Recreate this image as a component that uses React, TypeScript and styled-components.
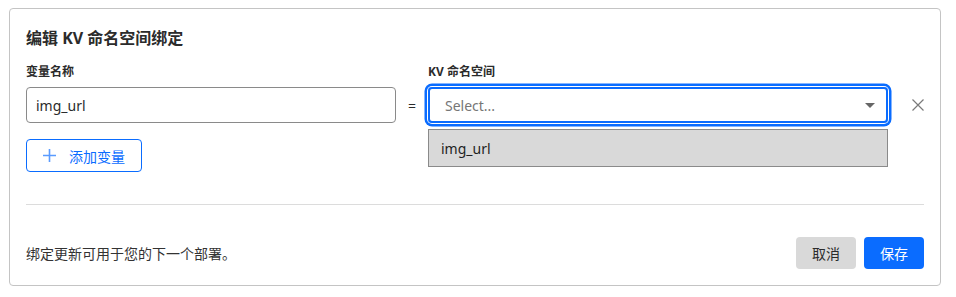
import React from 'react';
import styled, { createGlobalStyle } from 'styled-components';

const color = {
    text: '#2b2b2b',
    muted: '#767676',
    border: '#c4c4c4',
    field: '#8a8a8a',
    blue: '#0a6cff',
    grey: '#d9d9d9',
    rule: '#dcdcdc',
};

const GlobalStyle = createGlobalStyle`
    body {
        margin: 0;
        background: #ffffff;
        font-family: "Noto Sans", "Noto Sans CJK SC", sans-serif;
        color: ${color.text};
    }
`;

const Card = styled.div`
    box-sizing: border-box;
    width: 932px;
    margin: 8px 0 0 9px;
    padding: 17px 16px 16px 16px;
    border: 1px solid ${color.border};
    border-radius: 4px;
`;

const Title = styled.h2`
    margin: 0;
    font-size: 16px;
    line-height: 24px;
    font-weight: 700;
`;

const Fields = styled.div`
    display: grid;
    grid-template-columns: 370px 32px 460px 36px;
    grid-template-rows: 16px 36px;
    row-gap: 7px;
    margin-top: 14px;
`;

const Label = styled.label<{ $col: number }>`
    grid-column: ${(p) => p.$col};
    grid-row: 1;
    font-size: 12px;
    line-height: 16px;
    font-weight: 700;
`;

const TextInput = styled.div`
    box-sizing: border-box;
    grid-column: 1;
    grid-row: 2;
    display: flex;
    align-items: center;
    padding: 0 9px;
    border: 1px solid ${color.field};
    border-radius: 4px;
    font-size: 14px;
`;

const Equals = styled.span`
    grid-column: 2;
    grid-row: 2;
    display: flex;
    align-items: center;
    justify-content: center;
    font-size: 14px;
`;

const SelectWrap = styled.div`
    position: relative;
    grid-column: 3;
    grid-row: 2;
`;

const SelectBox = styled.div`
    box-sizing: border-box;
    height: 36px;
    display: flex;
    align-items: center;
    justify-content: space-between;
    padding: 0 11px 0 15px;
    border: 2px solid ${color.blue};
    border-radius: 4px;
    box-shadow: 0 0 0 1px #ffffff, 0 0 0 3.5px ${color.blue};
    font-size: 14px;
    color: ${color.muted};
`;

const Caret = styled.span`
    width: 0;
    height: 0;
    border-left: 5px solid transparent;
    border-right: 5px solid transparent;
    border-top: 5px solid #666666;
`;

const Menu = styled.ul`
    position: absolute;
    top: 42px;
    left: 0;
    right: 0;
    margin: 0;
    padding: 0;
    list-style: none;
`;

const Option = styled.li`
    box-sizing: border-box;
    height: 38px;
    display: flex;
    align-items: center;
    padding: 0 12px;
    background: ${color.grey};
    border: 1px solid ${color.field};
    font-size: 14px;
    color: #1f1f1f;
`;

const Remove = styled.button`
    grid-column: 4;
    grid-row: 2;
    display: flex;
    align-items: center;
    justify-content: flex-end;
    padding: 0;
    border: none;
    background: none;
    cursor: pointer;
`;

const AddButton = styled.button`
    box-sizing: border-box;
    margin-top: 16px;
    width: 116px;
    height: 33px;
    display: flex;
    align-items: center;
    gap: 13px;
    padding: 0 0 0 16px;
    border: 1px solid ${color.blue};
    border-radius: 4px;
    background: #ffffff;
    color: ${color.blue};
    font-family: inherit;
    font-size: 14px;
    cursor: pointer;
`;

const Rule = styled.hr`
    margin: 32px 0 0;
    border: none;
    border-top: 1px solid ${color.rule};
`;

const Footer = styled.div`
    margin-top: 32px;
    display: flex;
    align-items: center;
    justify-content: space-between;
`;

const Note = styled.p`
    margin: 0;
    font-size: 14px;
    color: #333333;
`;

const Actions = styled.div`
    display: flex;
    gap: 8px;
`;

const ActionButton = styled.button<{ $primary?: boolean }>`
    width: 60px;
    height: 32px;
    border: none;
    border-radius: 4px;
    background: ${(p) => (p.$primary ? color.blue : color.grey)};
    color: ${(p) => (p.$primary ? '#ffffff' : '#2b2b2b')};
    font-family: inherit;
    font-size: 14px;
    cursor: pointer;
`;

const PlusIcon = () => (
    <svg width="13" height="13" viewBox="0 0 13 13" fill="none" stroke="#5a9bff" strokeWidth="1.6">
        <path d="M6.5 0v13M0 6.5h13" />
    </svg>
);

const CloseIcon = () => (
    <svg width="12" height="12" viewBox="0 0 12 12" fill="none" stroke="#7a7a7a" strokeWidth="1.2">
        <path d="M0.5 0.5l11 11M11.5 0.5l-11 11" />
    </svg>
);

export default function App(): JSX.Element {
    return (
        <>
            <GlobalStyle />
            <Card>
                <Title>编辑 KV 命名空间绑定</Title>
                <Fields>
                    <Label $col={1}>变量名称</Label>
                    <Label $col={3}>KV 命名空间</Label>
                    <TextInput>img_url</TextInput>
                    <Equals>=</Equals>
                    <SelectWrap>
                        <SelectBox>
                            <span>Select...</span>
                            <Caret />
                        </SelectBox>
                        <Menu>
                            <Option>img_url</Option>
                        </Menu>
                    </SelectWrap>
                    <Remove aria-label="remove">
                        <CloseIcon />
                    </Remove>
                </Fields>
                <AddButton>
                    <PlusIcon />
                    添加变量
                </AddButton>
                <Rule />
                <Footer>
                    <Note>绑定更新可用于您的下一个部署。</Note>
                    <Actions>
                        <ActionButton>取消</ActionButton>
                        <ActionButton $primary>保存</ActionButton>
                    </Actions>
                </Footer>
            </Card>
        </>
    );
}
